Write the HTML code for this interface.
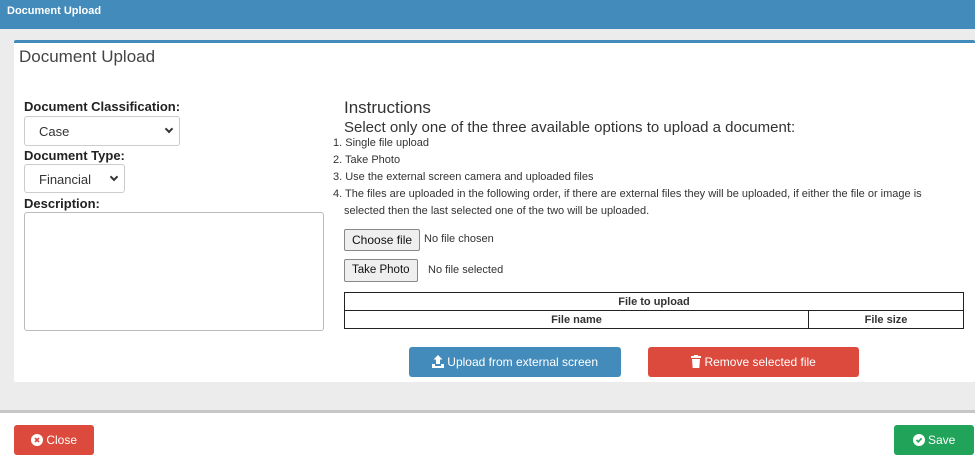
<!DOCTYPE html>
<html><head><meta charset="utf-8"><style>
*{box-sizing:border-box;margin:0;padding:0}
body{width:975px;height:456px;background:#fff;font-family:"Liberation Sans",sans-serif;position:relative;overflow:hidden;color:#333}
.a{position:absolute}
.hdr{left:0;top:0;width:975px;height:29px;background:#428bba;color:#fff;font-weight:bold;font-size:11px;padding:5px 7px}
.gray{left:0;top:29px;width:975px;height:384px;background:#ececec;border-bottom:3px solid #c6c6c6}
.card{left:14px;top:40px;width:961px;height:342px;background:#fff;border-top:3px solid #428bba;border-radius:2px}
.lbl{font-weight:bold;font-size:13px;color:#222}
.sel{border:1px solid #ccc;border-radius:3px;background:#fff;font-size:13px;padding:7px 14px;color:#333}
.chev{position:absolute;right:7px;top:9px;width:6px;height:6px;border-right:2px solid #333;border-bottom:2px solid #333;transform:rotate(45deg)}
.sm{font-size:11px;color:#333}
.btn{border:1px solid #888;background:#efefef;border-radius:2px;font-size:12px;padding:3px 7px;color:#111}
table{border-collapse:collapse;font-size:11px;font-weight:bold}
td{border:1px solid #222;text-align:center;height:18px}
.b{color:#fff;font-size:12px;text-align:center;border-radius:3px;padding-top:8px}
svg{vertical-align:-2px}
</style></head><body>
<div class="a hdr">Document Upload</div>
<div class="a gray"></div>
<div class="a card"></div>
<div class="a" style="left:19px;top:47px;font-size:17px;color:#444">Document Upload</div>
<div class="a lbl" style="left:24px;top:99px">Document Classification:</div>
<div class="a sel" style="left:24px;top:116px;width:156px;height:30px">Case<span class="chev"></span></div>
<div class="a lbl" style="left:24px;top:148px">Document Type:</div>
<div class="a sel" style="left:24px;top:164px;width:101px;height:29px">Financial<span class="chev"></span></div>
<div class="a lbl" style="left:24px;top:196px">Description:</div>
<div class="a" style="left:24px;top:212px;width:300px;height:119px;border:1px solid #bbb;border-radius:3px"></div>
<div class="a" style="left:344px;top:98px;font-size:17px">Instructions</div>
<div class="a" style="left:344px;top:119px;font-size:15px">Select only one of the three available options to upload a document:</div>
<div class="a sm" style="left:333px;top:135px;line-height:17px;width:620px">1. Single file upload<br>2. Take Photo<br>3. Use the external screen camera and uploaded files<br>4. The files are uploaded in the following order, if there are external files they will be uploaded, if either the file or image is<br><span style="padding-left:11px">selected then the last selected one of the two will be uploaded.</span></div>
<div class="a btn" style="left:344px;top:229px">Choose file</div>
<div class="a sm" style="left:424px;top:233px">No file chosen</div>
<div class="a btn" style="left:344px;top:259px;height:23px;font-size:11.5px;padding-top:4px">Take Photo</div>
<div class="a sm" style="left:428px;top:264px">No file selected</div>
<table class="a" style="left:344px;top:292px;width:620px"><tr><td colspan="2">File to upload</td></tr><tr><td style="width:464px">File name</td><td>File size</td></tr></table>
<div class="a b" style="left:409px;top:347px;width:212px;height:30px;background:#428bba"><svg width="12" height="13" viewBox="0 0 12 13"><path d="M6 0L1.5 4.5H4V9H8V4.5H10.5Z M0 9H3V11H9V9H12V13H0Z" fill="#fff"/></svg> Upload from external screen</div>
<div class="a b" style="left:648px;top:347px;width:211px;height:30px;background:#dc4a3d"><svg width="10" height="13" viewBox="0 0 10 13"><path d="M0 1H3V0H7V1H10V3H0Z M1 4H9L8.3 13H1.7Z" fill="#fff"/></svg> Remove selected file</div>
<div class="a b" style="left:14px;top:425px;width:80px;height:30px;background:#dc4a3d"><svg width="12" height="12" viewBox="0 0 12 12"><circle cx="6" cy="6" r="6" fill="#fff"/><path d="M4 4L8 8M8 4L4 8" stroke="#dc4a3d" stroke-width="1.6"/></svg> Close</div>
<div class="a b" style="left:894px;top:425px;width:80px;height:30px;background:#21a35a"><svg width="12" height="12" viewBox="0 0 12 12"><circle cx="6" cy="6" r="6" fill="#fff"/><path d="M3.5 6L5.3 7.8L8.6 4.3" stroke="#21a35a" stroke-width="1.6" fill="none"/></svg> Save</div>
</body></html>
